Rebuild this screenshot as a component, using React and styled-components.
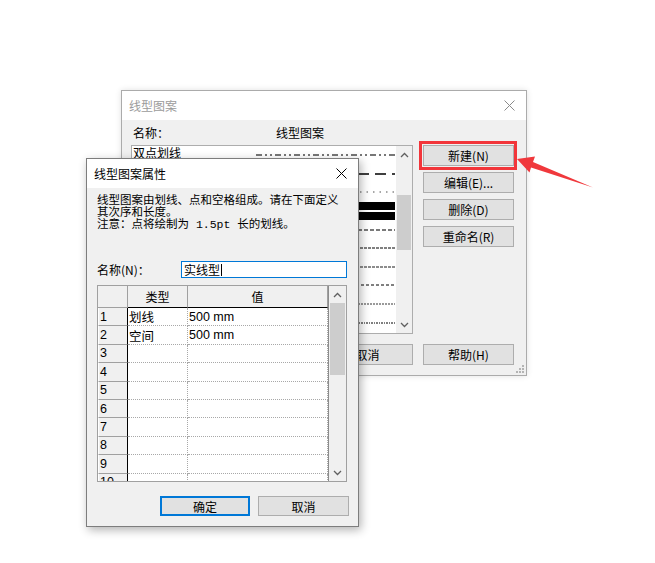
import React from "react";
import styled, { createGlobalStyle } from "styled-components";

const cjk = `"Noto Sans CJK SC", "Liberation Sans", sans-serif`;
const mono = `"Liberation Mono", "Noto Sans CJK SC", monospace`;

const GlobalStyle = createGlobalStyle`
  html, body {
    margin: 0;
    padding: 0;
    background: #fff;
  }
  body {
    font-family: ${cjk};
  }
`;

const Desktop = styled.div`
  position: relative;
  width: 655px;
  height: 563px;
  overflow: hidden;
  background: #fff;
`;

// dialogs sit on a free desktop, so their place is given by coordinates
const Window = styled.div`
  position: absolute;
  left: ${(p) => p.$x}px;
  top: ${(p) => p.$y}px;
  width: ${(p) => p.$w}px;
  height: ${(p) => p.$h}px;
  z-index: ${(p) => p.$z};
  box-sizing: border-box;
  border: 1px solid ${(p) => (p.$active ? "#7d7d7d" : "#ababab")};
  background: #f0f0f0;
  box-shadow: ${(p) =>
    p.$active ? "2px 3px 9px rgba(0, 0, 0, 0.3)" : "0 0 6px rgba(0, 0, 0, 0.12)"};
  display: flex;
  flex-direction: column;
  font-family: ${cjk};
  font-size: 12px;
  color: #000;
`;

const TitleBar = styled.div`
  height: 29px;
  flex: none;
  background: #fff;
  display: flex;
  align-items: center;
  justify-content: space-between;
  padding: 0 11px 0 7px;
`;

const TitleText = styled.span`
  font-size: 12px;
  color: ${(p) => (p.$inactive ? "#9b9b9b" : "#000")};
`;

const CloseIcon = ({ color }) => (
  <svg width="11" height="11" viewBox="0 0 11 11">
    <path d="M0.5 0.5 L10.5 10.5 M10.5 0.5 L0.5 10.5" stroke={color} strokeWidth="1" />
  </svg>
);

const Chevron = ({ down }) => (
  <svg width="9" height="6" viewBox="0 0 9 6">
    <polyline
      points={down ? "1,1 4.5,4.5 8,1" : "1,5 4.5,1.5 8,5"}
      fill="none"
      stroke="#606060"
      strokeWidth="1.3"
    />
  </svg>
);

const Button = styled.button`
  box-sizing: border-box;
  width: ${(p) => p.$w || 91}px;
  height: ${(p) => p.$h || 21}px;
  margin: 0;
  padding: 0;
  background: #e1e1e1;
  border: 1px solid ${(p) => (p.$default ? "#0078d7" : "#adadad")};
  box-shadow: ${(p) => (p.$default ? "inset 0 0 0 1px #0078d7" : "none")};
  font-family: ${cjk};
  font-size: 12px;
  color: #000;
`;

/* ---------- scroll bar ---------- */

const ScrollBar = styled.div`
  width: ${(p) => p.$w}px;
  flex: none;
  background: #f0f0f0;
  display: flex;
  flex-direction: column;
`;

const ScrollArrow = styled.div`
  height: 17px;
  flex: none;
  display: flex;
  align-items: center;
  justify-content: center;
`;

const ScrollTrack = styled.div`
  flex: 1;
  padding: ${(p) => p.$offset}px 1px 0;
`;

const ScrollThumb = styled.div`
  height: ${(p) => p.$h}px;
  background: #cdcdcd;
`;

const Scroller = ({ width, offset, thumb }) => (
  <ScrollBar $w={width}>
    <ScrollArrow>
      <Chevron />
    </ScrollArrow>
    <ScrollTrack $offset={offset}>
      <ScrollThumb $h={thumb} />
    </ScrollTrack>
    <ScrollArrow>
      <Chevron down />
    </ScrollArrow>
  </ScrollBar>
);

/* ---------- back dialog: 线型图案 ---------- */

const PatternBody = styled.div`
  flex: 1;
  display: grid;
  grid-template-columns: 282px 91px;
  grid-template-rows: 25px 189px 21px;
  column-gap: 10px;
  padding: 0 11px 10px 9px;
`;

const LabelRow = styled.div`
  display: flex;
  align-items: center;
  grid-column: 1 / 3;
`;

const NameHead = styled.span`
  width: 145px;
  padding-left: 2px;
  box-sizing: border-box;
`;

const PatternList = styled.div`
  display: flex;
  border: 1px solid #adadad;
  background: #fff;
  overflow: hidden;
`;

const PatternRows = styled.div`
  flex: 1;
`;

const PatternRow = styled.div`
  height: 18.6px;
  display: grid;
  grid-template-columns: 123px 139px;
  align-items: center;
  font-size: 12px;
  padding-left: 1px;
`;

const PatternName = styled.span`
  line-height: 14px;
  margin-bottom: 4px;
`;

const SideButtons = styled.div`
  display: flex;
  flex-direction: column;
  gap: 6px;
`;

const Highlight = styled.div`
  position: relative;

  &::after {
    content: "";
    position: absolute;
    left: -4px;
    top: -4px;
    right: -3px;
    bottom: -4px;
    border: 3px solid #f2353a;
  }
`;

const BottomLeft = styled.div`
  margin-top: 10px;
  display: flex;
  justify-content: flex-end;
  gap: 9px;
`;

const BottomRight = styled.div`
  margin-top: 10px;
`;

const Grip = styled.svg`
  position: absolute;
  right: 2px;
  bottom: 2px;
`;

const patterns = [
  { name: "双点划线", color: "#777", width: 2, dash: "6 3 2 3 2 3" },
  { color: "#000", width: 1.5, dash: "11 6" },
  { color: "#8a8a8a", width: 1.5, dash: "1.5 5" },
  { double: true },
  { color: "#7a7a7a", width: 2, dash: "4 2" },
  { color: "#000", width: 1, dash: "3 1" },
  { color: "#8c8c8c", width: 2, dash: "3 1" },
  { color: "#000", width: 1, dash: "3 2" },
  { color: "#9a9a9a", width: 2, dash: "2 1" },
  { color: "#000", width: 1, dash: "2 1 1 1" },
];

const LineSample = ({ p }) => (
  <svg width="139" height="18" viewBox="0 0 139 18">
    {p.double ? (
      <>
        <rect x="0" y="0" width="139" height="8" fill="#000" />
        <rect x="0" y="10" width="139" height="8" fill="#000" />
      </>
    ) : (
      <line
        x1="0"
        y1="9"
        x2="139"
        y2="9"
        stroke={p.color}
        strokeWidth={p.width}
        strokeDasharray={p.dash}
      />
    )}
  </svg>
);

const PatternDialog = () => (
  <Window $x={121} $y={90} $w={406} $h={286} $z={1}>
    <TitleBar>
      <TitleText $inactive>线型图案</TitleText>
      <CloseIcon color="#8a8a8a" />
    </TitleBar>
    <PatternBody>
      <LabelRow>
        <NameHead>名称：</NameHead>
        <span>线型图案</span>
      </LabelRow>
      <PatternList>
        <PatternRows>
          {patterns.map((p, i) => (
            <PatternRow key={i}>
              <PatternName>{p.name || ""}</PatternName>
              <LineSample p={p} />
            </PatternRow>
          ))}
        </PatternRows>
        <Scroller width={16} offset={32} thumb={55} />
      </PatternList>
      <SideButtons>
        <Highlight>
          <Button>新建(N)</Button>
        </Highlight>
        <Button>编辑(E)...</Button>
        <Button>删除(D)</Button>
        <Button>重命名(R)</Button>
      </SideButtons>
      <BottomLeft>
        <Button>确定</Button>
        <Button>取消</Button>
      </BottomLeft>
      <BottomRight>
        <Button>帮助(H)</Button>
      </BottomRight>
    </PatternBody>
    <Grip width="8" height="8" viewBox="0 0 8 8">
      {[
        [6, 0],
        [6, 3],
        [3, 3],
        [6, 6],
        [3, 6],
        [0, 6],
      ].map(([x, y]) => (
        <rect key={`${x}-${y}`} x={x} y={y} width="2" height="2" fill="#b4b4b4" />
      ))}
    </Grip>
  </Window>
);

/* ---------- front dialog: 线型图案属性 ---------- */

const PropsBody = styled.div`
  flex: 1;
  display: flex;
  flex-direction: column;
  padding: 7px 9px 10px 10px;
`;

const Description = styled.div`
  font-family: ${mono};
  font-size: 11.5px;
  line-height: 12px;
  white-space: nowrap;
`;

const NameRow = styled.div`
  margin-top: 30px;
  height: 17px;
  display: flex;
  align-items: center;
`;

const NameLabel = styled.span`
  width: 84px;
  font-size: 12px;
`;

const NameInput = styled.div`
  box-sizing: border-box;
  width: 166px;
  height: 17px;
  border: 1px solid #0078d7;
  background: #fff;
  display: flex;
  align-items: center;
  padding-left: 2px;
  font-size: 12px;
`;

const Caret = styled.span`
  width: 1px;
  height: 12px;
  background: #000;
  margin-left: 1px;
`;

const Sheet = styled.div`
  margin-top: 7px;
  width: 250px;
  height: 197px;
  box-sizing: border-box;
  border: 1px solid #a0a0a0;
  background: #fff;
  display: flex;
`;

const SheetCells = styled.div`
  flex: 1;
  overflow: hidden;
  display: grid;
  grid-template-columns: 30px 60px 140px;
  grid-template-rows: 22px;
  grid-auto-rows: 18.4px;
  align-content: start;
  border-right: 1px solid #8c8c8c;
`;

const Corner = styled.div`
  box-sizing: border-box;
  background: #f0f0f0;
  border-right: 1px solid #a0a0a0;
  border-bottom: 1px solid #a0a0a0;
`;

const HeadCell = styled.div`
  box-sizing: border-box;
  background: #f0f0f0;
  border-right: 1px solid #a0a0a0;
  border-bottom: 1px solid #000;
  display: flex;
  align-items: center;
  justify-content: center;
  font-size: 12px;
`;

const RowHead = styled.div`
  box-sizing: border-box;
  background: #f0f0f0;
  border-right: 1px solid #000;
  border-bottom: 1px solid #a0a0a0;
  border-left: 1px solid #fff;
  padding-left: 1px;
  display: flex;
  align-items: center;
  font-family: "Liberation Sans", sans-serif;
  font-size: 12.5px;
`;

const Cell = styled.div`
  box-sizing: border-box;
  border-right: 1px dotted #a8a8a8;
  border-bottom: 1px dotted #a8a8a8;
  padding-left: 1px;
  display: flex;
  align-items: center;
  font-family: "Liberation Sans", "Noto Sans CJK SC", sans-serif;
  font-size: 12.5px;
  white-space: nowrap;
`;

const DialogButtons = styled.div`
  margin-top: 14px;
  display: flex;
  justify-content: flex-end;
  gap: 8px;
`;

const segments = [
  ["划线", "500 mm"],
  ["空间", "500 mm"],
  ["", ""],
  ["", ""],
  ["", ""],
  ["", ""],
  ["", ""],
  ["", ""],
  ["", ""],
  ["", ""],
];

const PropertiesDialog = () => (
  <Window $x={86} $y={158} $w={273} $h={369} $z={2} $active>
    <TitleBar>
      <TitleText>线型图案属性</TitleText>
      <CloseIcon color="#000" />
    </TitleBar>
    <PropsBody>
      <Description>
        线型图案由划线、点和空格组成。请在下面定义
        <br />
        其次序和长度。
        <br />
        注意：点将绘制为 1.5pt 长的划线。
      </Description>
      <NameRow>
        <NameLabel>名称(N)：</NameLabel>
        <NameInput>
          实线型
          <Caret />
        </NameInput>
      </NameRow>
      <Sheet>
        <SheetCells>
          <Corner />
          <HeadCell>类型</HeadCell>
          <HeadCell>值</HeadCell>
          {segments.map(([kind, value], i) => (
            <React.Fragment key={i}>
              <RowHead>{i + 1}</RowHead>
              <Cell>{kind}</Cell>
              <Cell>{value}</Cell>
            </React.Fragment>
          ))}
        </SheetCells>
        <Scroller width={17} offset={0} thumb={72} />
      </Sheet>
      <DialogButtons>
        <Button $w={90} $h={20} $default>
          确定
        </Button>
        <Button $w={91} $h={20}>
          取消
        </Button>
      </DialogButtons>
    </PropsBody>
  </Window>
);

const Arrow = styled.svg`
  position: absolute;
  left: 0;
  top: 0;
  z-index: 3;
`;

export default function App() {
  return (
    <>
      <GlobalStyle />
      <Desktop>
        <PatternDialog />
        <PropertiesDialog />
        <Arrow width="655" height="563" viewBox="0 0 655 563">
          <polygon
            points="517,159 535,156.5 533,162 593,187.5 531,167.4 529.5,172.5"
            fill="#f0383c"
          />
        </Arrow>
      </Desktop>
    </>
  );
}
